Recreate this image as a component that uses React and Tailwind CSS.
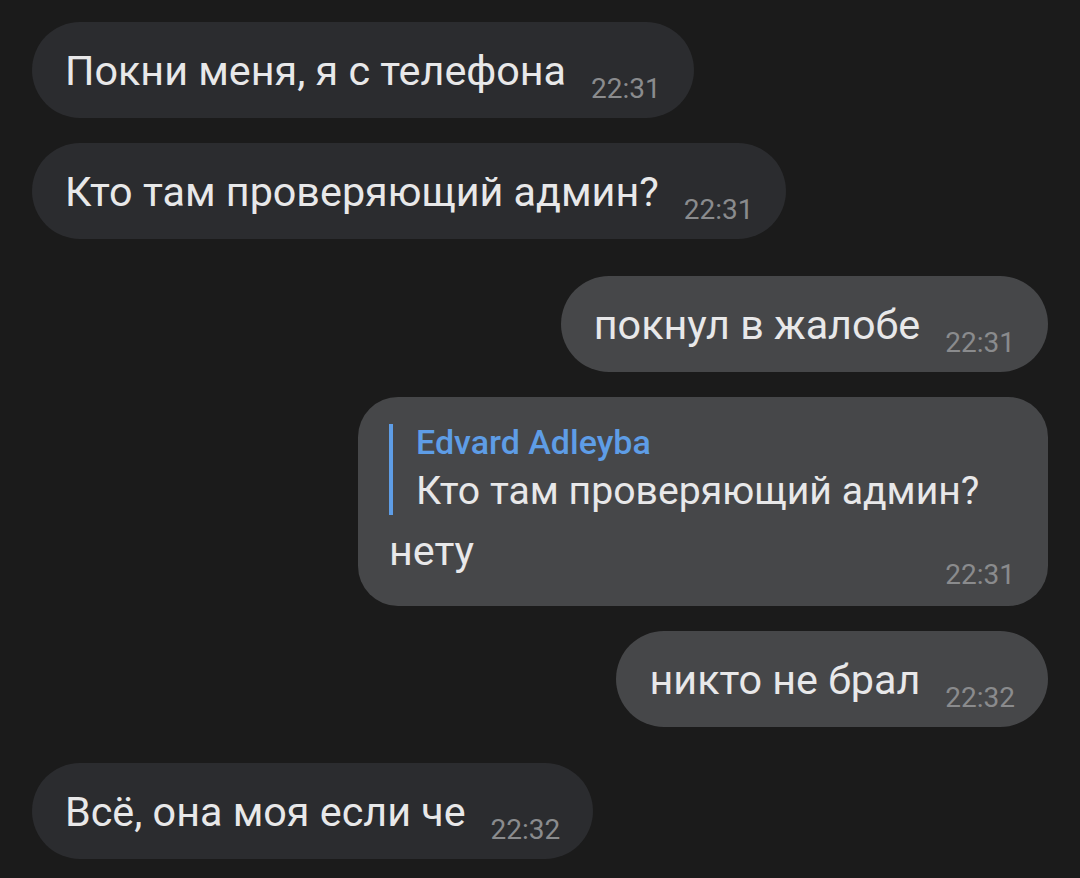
const incoming = 'bg-[#2b2c2f]';
const outgoing = 'bg-[#464749]';

function Bubble({ text, time, out, className = '' }) {
  return (
    <div
      className={`flex h-[96px] items-start rounded-[48px] pl-[33px] pr-[33px] pt-[25px] ${out ? outgoing : incoming} ${className}`}
    >
      <span className="text-[41.3px] leading-[48px] text-[#e8e8e9] whitespace-nowrap">{text}</span>
      <span className="ml-[25px] mt-[28px] text-[28px] leading-[28px] text-[#8a8b8d] whitespace-nowrap">{time}</span>
    </div>
  );
}

export default function App() {
  return (
    <div className="h-[878px] w-[1080px] overflow-hidden bg-[#1b1b1b] px-[32px] pt-[22px] font-['Roboto',sans-serif]">
      <div className="flex flex-col">
        <div className="flex justify-start">
          <Bubble text="Покни меня, я с телефона" time="22:31" />
        </div>
        <div className="mt-[25px] flex justify-start">
          <Bubble text="Кто там проверяющий админ?" time="22:31" />
        </div>
        <div className="mt-[37px] flex justify-end">
          <Bubble out text="покнул в жалобе" time="22:31" />
        </div>
        <div className="mt-[25px] flex justify-end">
          <div className={`w-[690px] rounded-[40px] ${outgoing} pb-[17px] pl-[31px] pr-[33px] pt-[27px]`}>
            <div className="flex border-l-4 border-[#5e9de6]">
              <div className="pl-[23px]">
                <div className="text-[34px] font-medium leading-[36px] text-[#5e9de6]">Edvard Adleyba</div>
                <div className="mt-[7px] whitespace-nowrap text-[39.2px] leading-[48px] text-[#e8e8e9]">
                  Кто там проверяющий админ?
                </div>
              </div>
            </div>
            <div className="mt-[12px] flex items-start justify-between">
              <span className="text-[41.3px] leading-[48px] text-[#e8e8e9]">нету</span>
              <span className="mt-[34px] text-[28px] leading-[28px] text-[#8a8b8d]">22:31</span>
            </div>
          </div>
        </div>
        <div className="mt-[25px] flex justify-end">
          <Bubble out text="никто не брал" time="22:32" />
        </div>
        <div className="mt-[36px] flex justify-start">
          <Bubble text="Всё, она моя если че" time="22:32" />
        </div>
      </div>
    </div>
  );
}
